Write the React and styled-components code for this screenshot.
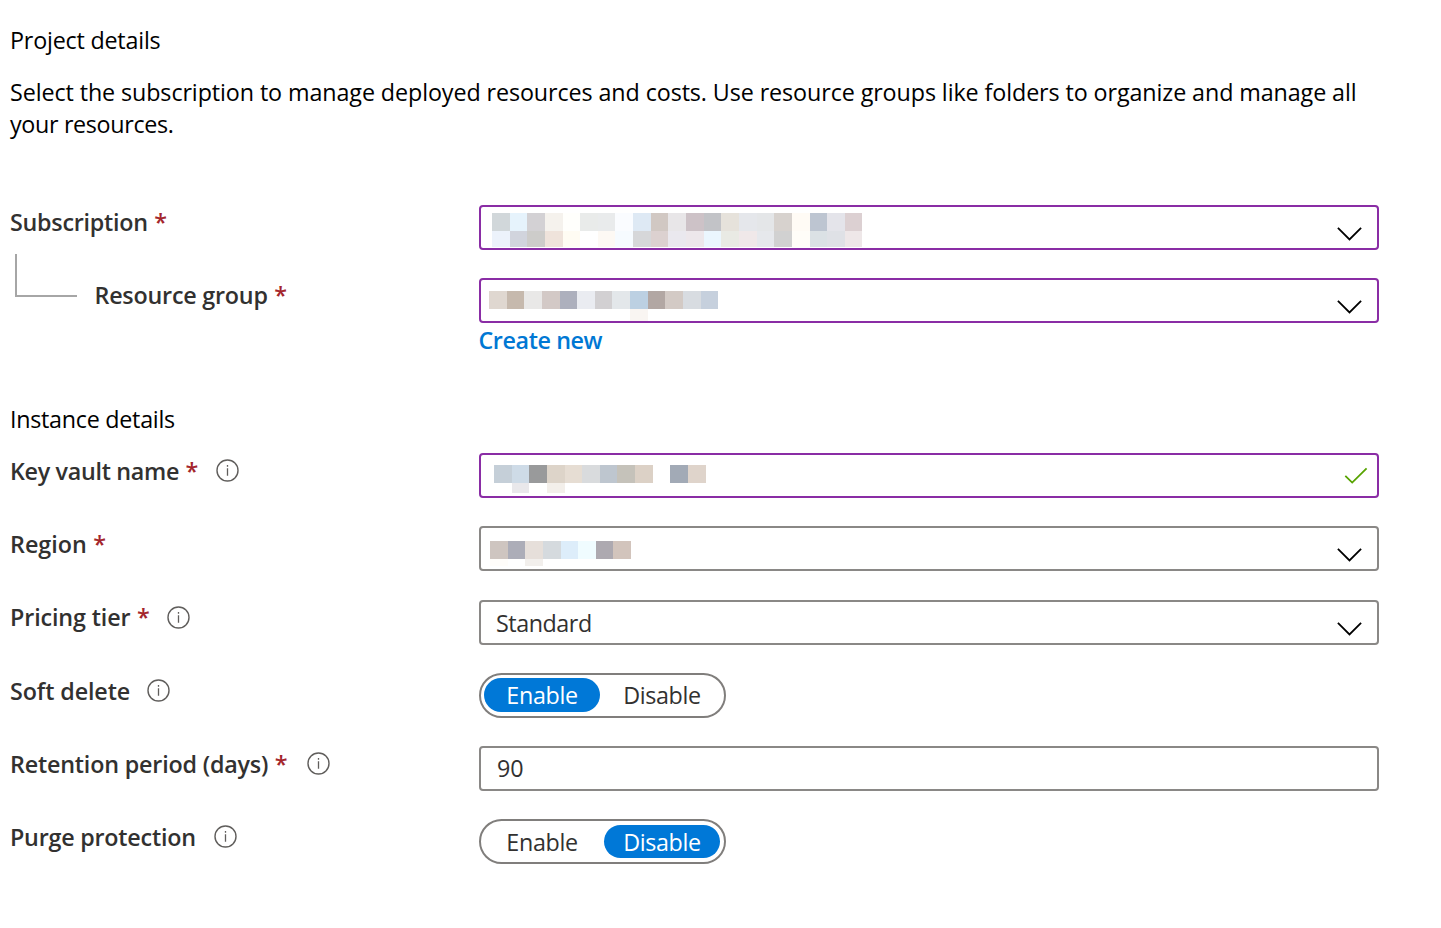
import React from "react";
import styled, { createGlobalStyle } from "styled-components";

const GlobalStyle = createGlobalStyle`
  body {
    margin: 0;
    background: #fff;
    color: #323130;
    font-family: "Segoe UI", "Open Sans", "Noto Sans", sans-serif;
    font-size: 23.3px;
    line-height: 32px;
  }
`;

const Page = styled.main`
  box-sizing: border-box;
  height: 928px;
  padding: 24px 0 0 10px;
  overflow: hidden;
`;

const SectionTitle = styled.h2`
  margin: ${(p) => p.$top || 0}px 0 0;
  font-size: inherit;
  font-weight: 400;
  color: #000;
  white-space: nowrap;
  letter-spacing: ${(p) => p.$track || 0}px;
`;

const Description = styled.p`
  margin: 20px 0 0;
  color: #000;
  white-space: nowrap;
`;

const Line = styled.span`
  display: block;
  letter-spacing: ${(p) => p.$track || 0}px;
`;

const Row = styled.div`
  display: grid;
  grid-template-columns: 469px 900px;
  height: 45px;
  margin-top: ${(p) => p.$top ?? 28}px;
`;

const LabelCell = styled.div`
  display: flex;
  align-items: flex-start;
  padding-top: 1px;
  font-weight: 600;
  white-space: nowrap;
`;

const LabelText = styled.span`
  padding-top: ${(p) => p.$drop}px;
  letter-spacing: ${(p) => p.$track || 0}px;
`;

const Required = styled.span`
  margin-left: 6.5px;
  padding-top: ${(p) => p.$drop}px;
  width: 13px;
  color: #a4262c;
`;

const InfoSvg = styled.svg`
  flex: none;
  margin: 5px 0 0 ${(p) => p.$left}px;
`;

const Connector = styled.div`
  box-sizing: border-box;
  flex: none;
  width: 62px;
  height: 43px;
  margin: -25px 17.5px 0 5px;
  border: solid #a6a6a6;
  border-width: 0 0 2px 2px;
`;

const Field = styled.div`
  box-sizing: border-box;
  display: flex;
  justify-content: space-between;
  height: 45px;
  border: 2px solid ${(p) => (p.$edited ? "#8a2da5" : "#8a8886")};
  border-radius: 4px;
  background: #fff;
`;

const Value = styled.span`
  padding: ${(p) => p.$top}px 0 0 ${(p) => p.$left}px;
  letter-spacing: ${(p) => p.$track || 0}px;
`;

const FieldIcon = styled.svg`
  flex: none;
  margin: ${(p) => p.$top}px ${(p) => p.$right}px 0 0;
`;

const Redaction = styled.div`
  display: grid;
  grid-template-columns: repeat(${(p) => p.$columns}, 17.648px);
  grid-template-rows: 18px ${(p) => p.$tail}px;
  align-content: start;
  padding: ${(p) => p.$top}px 0 0 ${(p) => p.$left}px;
`;

const Block = styled.i`
  background: ${(p) => p.$tone};
`;

const Link = styled.a`
  display: block;
  width: max-content;
  height: 32px;
  margin: 1px 0 0 468.5px;
  color: #0078d4;
  font-weight: 600;
  text-decoration: none;
  letter-spacing: -0.4px;
`;

const Toggle = styled.div`
  box-sizing: border-box;
  display: flex;
  gap: 4px;
  width: 247px;
  height: 45px;
  padding: ${(p) => p.$inset}px 3px 0;
  border: 2px solid #807e7c;
  border-radius: 23px;
`;

const Option = styled.button`
  width: 116px;
  height: ${(p) => p.$height}px;
  padding: 0;
  border: 0;
  border-radius: 17px;
  background: ${(p) => (p.$on ? "#0078d7" : "transparent")};
  color: ${(p) => (p.$on ? "#fff" : "#323130")};
  font: inherit;
  line-height: 34px;
  letter-spacing: -0.35px;
`;

const Info = ({ left }) => (
  <InfoSvg $left={left} width="23" height="23" viewBox="0 0 23 23" fill="none">
    <circle cx="11.5" cy="11.5" r="10.5" stroke="#605e5c" strokeWidth="1.4" />
    <path d="M11.5 9.2v7.6M11.5 6v1.7" stroke="#605e5c" strokeWidth="1.3" />
  </InfoSvg>
);

const Chevron = () => (
  <FieldIcon $top={19} $right={14} width="26" height="16" viewBox="0 0 26 16" fill="none">
    <path d="M0.9 1.8 12.5 13.4 24.1 1.8" stroke="#000" strokeWidth="1.8" />
  </FieldIcon>
);

const Check = () => (
  <FieldIcon $top={12} $right={9} width="24" height="18" viewBox="0 0 24 18" fill="none">
    <path d="M1.3 8.8 8.2 15.6 22.6 1.4" stroke="#57a300" strokeWidth="1.8" />
  </FieldIcon>
);

const Label = ({ children, track, required, info, nested, drop = 1 }) => (
  <LabelCell>
    {nested && <Connector />}
    <LabelText $track={track} $drop={drop}>{children}</LabelText>
    {required && <Required $drop={drop}>*</Required>}
    {info && <Info left={info} />}
  </LabelCell>
);

const Redacted = ({ tones, tail, top, left }) => {
  const columns = tones[0].length;
  return (
    <Redaction $columns={columns} $tail={tail} $top={top} $left={left}>
      {tones.flatMap((line, r) =>
        Array.from({ length: columns }, (_, c) => (
          <Block key={`${r}-${c}`} $tone={line[c] || "transparent"} />
        ))
      )}
    </Redaction>
  );
};

const subscriptionTones = [
  ["#d1d7da", "#e6f3fc", "#d3d1d4", "#f5f2ed", "#fffffc", "#e9ebea", "#e9ebec", "#fafcff", "#dee9f4", "#d1c8c3", "#e8e6e8", "#cdc2c7", "#c2c3c7", "#e6e2db", "#e5e7eb", "#e4e6e8", "#d7d2ce", "#fffbf5", "#bdc5d1", "#e4e4ea", "#dcd0d2"],
  ["#ecf2fb", "#d1d4dd", "#cdccca", "#efe3db", "#fffcf3", "#ffffff", "#fdf9f4", "#f6fbff", "#d6d7d9", "#dcd1d0", "#eae8ee", "#ede7eb", "#ebf6fe", "#e9eae4", "#f0e8e9", "#e6e8ec", "#d1d1d1", "#fffdf8", "#dbe1e5", "#dfe1e6", "#eee7e8"],
];
const groupTones = [
  ["#dfd7d0", "#c6b9ad", "#e9e8e7", "#d3c9c6", "#adb0bd", "#eaecf1", "#d2d0d2", "#e3e7ea", "#bcd0e2", "#b2a7a3", "#d3cac5", "#d8dce1", "#c6d0dd"],
  [null, null, null, null, null, null, null, null, "#f9f5f2"],
];
const vaultTones = [
  ["#c5cfd8", "#cedbe7", "#999a9b", "#ddd4c9", "#e6ddd3", "#d9dbdd", "#bec6cf", "#c5c2ba", "#dcd1c6", null, "#a2aab6", "#dfd4cb"],
  [null, "#e9e8eb", null, "#f3efea"],
];
const regionTones = [
  ["#cec5c0", "#acadb8", "#e6dfda", "#d5dade", "#ddedfa", "#f0fcff", "#ada9b0", "#d2c4bc"],
  ["#fffdfa", null, "#f2efec"],
];

export default function App() {
  return (
    <>
      <GlobalStyle />
      <Page>
        <SectionTitle $track={-0.2}>Project details</SectionTitle>
        <Description>
          <Line $track={-0.095}>
            Select the subscription to manage deployed resources and costs. Use resource groups like folders to organize and manage all
          </Line>
          <Line $track={-0.33}>your resources.</Line>
        </Description>

        <Row $top={65}>
          <Label required track={-0.25} drop={0}>Subscription</Label>
          <Field $edited>
            <Redacted tones={subscriptionTones} tail={16} top={6} left={11} />
            <Chevron />
          </Field>
        </Row>
        <Row>
          <Label required nested track={-0.22} drop={0}>Resource group</Label>
          <Field $edited>
            <Redacted tones={groupTones} tail={12} top={11} left={8} />
            <Chevron />
          </Field>
        </Row>
        <Link>Create new</Link>

        <SectionTitle $top={47} $track={-0.27}>Instance details</SectionTitle>
        <Row $top={18}>
          <Label required info={17.5} track={-0.3}>Key vault name</Label>
          <Field $edited>
            <Redacted tones={vaultTones} tail={10} top={10} left={13} />
            <Check />
          </Field>
        </Row>
        <Row>
          <Label required>Region</Label>
          <Field>
            <Redacted tones={regionTones} tail={7} top={13} left={9} />
            <Chevron />
          </Field>
        </Row>
        <Row $top={29}>
          <Label required info={17} track={-0.12} drop={0}>Pricing tier</Label>
          <Field>
            <Value $left={15} $top={5} $track={-0.45}>Standard</Value>
            <Chevron />
          </Field>
        </Row>
        <Row>
          <Label info={17} track={-0.1}>Soft delete</Label>
          <Toggle $inset={3}>
            <Option $on $height={34}>Enable</Option>
            <Option $height={34}>Disable</Option>
          </Toggle>
        </Row>
        <Row>
          <Label required info={19} track={-0.18}>Retention period (days)</Label>
          <Field>
            <Value $left={16} $top={4}>90</Value>
          </Field>
        </Row>
        <Row>
          <Label info={17.8} track={-0.22}>Purge protection</Label>
          <Toggle $inset={4}>
            <Option $height={33}>Enable</Option>
            <Option $on $height={33}>Disable</Option>
          </Toggle>
        </Row>
      </Page>
    </>
  );
}
